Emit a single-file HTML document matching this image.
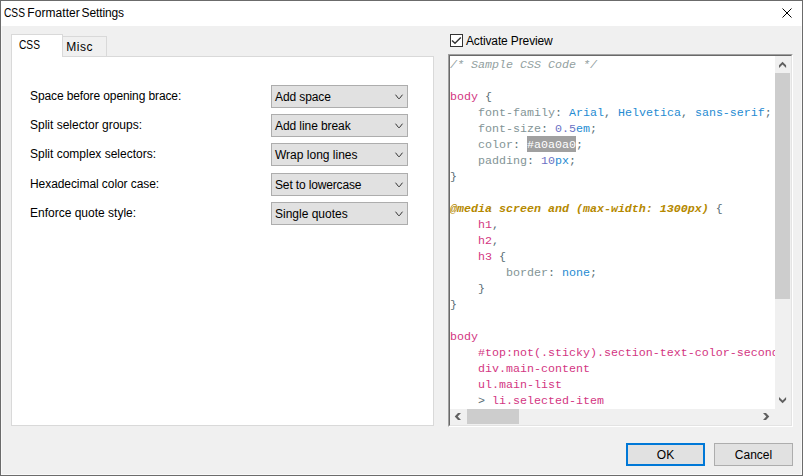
<!DOCTYPE html>
<html><head><meta charset="utf-8">
<style>
*{margin:0;padding:0;box-sizing:border-box}
html,body{width:803px;height:476px;overflow:hidden;background:#f0f0f0}
body{position:relative;font-family:"Liberation Sans",sans-serif;font-size:12px;color:#000}
.a{position:absolute}
#win{left:0;top:0;width:803px;height:476px;border:1px solid #6b6b6b;background:#f0f0f0}
#title{left:1px;top:1px;width:801px;height:25px;background:#fff}
#ttl{left:4px;top:6px;white-space:nowrap;line-height:14px;letter-spacing:-0.27px}
.lbl{white-space:nowrap;line-height:14px}
.tab{background:#fff;border:1px solid #d9d9d9}
.combo{width:137px;height:23px;background:#e1e1e1;border:1px solid #adadad}
.combo span{position:absolute;left:3px;top:4px;white-space:nowrap;line-height:14px}
.combo svg{position:absolute;left:0;top:0}
.btn{height:23px;width:79px;background:#e1e1e1;border:1px solid #adadad;text-align:center;line-height:22px}
#code{left:448px;top:54px;width:345px;height:373px;border-style:solid;border-width:1px;border-color:#a0a0a0 #fff #fff #a0a0a0;background:#fff}
#code2{left:449px;top:55px;width:343px;height:371px;border-style:solid;border-width:1px;border-color:#696969 #e3e3e3 #e3e3e3 #696969}
#codein{left:450px;top:56px;width:325px;height:353px;overflow:hidden;padding-top:1px;font-family:"Liberation Mono",monospace;font-size:11.67px;line-height:16px;white-space:pre;color:#586e75}
.cm{color:#93a1a1;font-style:italic}
.sl{color:#d33682}
.pr{color:#839496}
.vl{color:#268bd2}
.nm{color:#6c71c4}
.md{color:#b58900;font-weight:bold;font-style:italic}
.hl{color:#fff}
</style></head><body>
<div id="win" class="a"></div>
<div class="a" style="left:1px;top:1px;width:801px;height:474px;border:1px solid #f9f9f9;border-top:none"></div>
<div id="title" class="a"></div>
<div class="a lbl" style="left:3.6px;top:6px;transform:scaleX(0.85);transform-origin:0 0">CSS</div><div class="a lbl" style="left:27.3px;top:6px;letter-spacing:0.07px">Formatter</div><div class="a lbl" style="left:81.5px;top:6px;letter-spacing:-0.11px">Settings</div>
<svg class="a" style="left:0;top:0" width="803" height="30"><path d="M782.5 8.5 L791.5 17.5 M791.5 8.5 L782.5 17.5" stroke="#000" stroke-width="1" fill="none"/></svg>

<!-- tab control -->
<div class="a tab" style="left:11px;top:56px;width:423px;height:370px"></div>
<div class="a" style="left:62px;top:36px;width:45px;height:21px;background:#f0f0f0;border:1px solid #d9d9d9"></div>
<div class="a" style="left:11px;top:34px;width:52px;height:23px;background:#fff;border:1px solid #d9d9d9;border-bottom:none"></div>
<div class="a lbl" style="left:18.5px;top:38px;transform:scaleX(0.85);transform-origin:0 0">CSS</div>
<div class="a lbl" style="left:66.3px;top:40px;letter-spacing:0.5px">Misc</div>

<div class="a lbl" style="left:30px;top:89px;letter-spacing:-0.11px">Space before opening brace:</div>
<div class="a lbl" style="left:30px;top:118px">Split selector groups:</div>
<div class="a lbl" style="left:30px;top:147px">Split complex selectors:</div>
<div class="a lbl" style="left:30px;top:177px;letter-spacing:-0.07px">Hexadecimal color case:</div>
<div class="a lbl" style="left:30px;top:206px">Enforce quote style:</div>

<div class="a combo" style="left:271px;top:85px"><span style="letter-spacing:-0.1px">Add space</span><svg width="137" height="23"><path d="M123.5 8.7 L126.5 12.5 L127.5 12.5 L130.5 8.7" stroke="#333" fill="none"/></svg></div>
<div class="a combo" style="left:271px;top:114px"><span style="letter-spacing:-0.08px">Add line break</span><svg width="137" height="23"><path d="M123.5 8.7 L126.5 12.5 L127.5 12.5 L130.5 8.7" stroke="#333" fill="none"/></svg></div>
<div class="a combo" style="left:271px;top:143px"><span>Wrap long lines</span><svg width="137" height="23"><path d="M123.5 8.7 L126.5 12.5 L127.5 12.5 L130.5 8.7" stroke="#333" fill="none"/></svg></div>
<div class="a combo" style="left:271px;top:173px"><span style="letter-spacing:-0.15px">Set to lowercase</span><svg width="137" height="23"><path d="M123.5 8.7 L126.5 12.5 L127.5 12.5 L130.5 8.7" stroke="#333" fill="none"/></svg></div>
<div class="a combo" style="left:271px;top:202px"><span>Single quotes</span><svg width="137" height="23"><path d="M123.5 8.7 L126.5 12.5 L127.5 12.5 L130.5 8.7" stroke="#333" fill="none"/></svg></div>

<!-- preview -->
<div class="a" style="left:450px;top:34px;width:13px;height:13px;border:1px solid #333;background:#fff"></div>
<svg class="a" style="left:450px;top:34px" width="13" height="13"><path d="M2 6.4 L5 9.2 L10.8 3.4" stroke="#333" stroke-width="1.4" fill="none"/></svg>
<div class="a lbl" style="left:466px;top:34px;letter-spacing:-0.13px">Activate Preview</div>

<div id="code" class="a"></div><div id="code2" class="a"></div>
<div class="a" style="left:527px;top:136px;width:49px;height:16px;background:#a0a0a0"></div>
<div id="codein" class="a"><span class="cm">/* Sample CSS Code */</span>

<span class="sl">body</span> {
    <span class="pr">font-family</span>: <span class="vl">Arial</span>, <span class="vl">Helvetica</span>, <span class="vl">sans-serif</span>;
    <span class="pr">font-size</span>: <span class="nm">0.5</span><span class="vl">em</span>;
    <span class="pr">color</span>: <span class="hl">#a0a0a0</span>;
    <span class="pr">padding</span>: <span class="nm">10</span><span class="vl">px</span>;
}

<span class="md">@media screen and (max-width: 1300px)</span> {
    <span class="sl">h1</span>,
    <span class="sl">h2</span>,
    <span class="sl">h3</span> {
        <span class="pr">border</span>: <span class="vl">none</span>;
    }
}

<span class="sl">body</span>
    <span class="sl">#top:not(.sticky).section-text-color-secondary</span>
    <span class="sl">div.main-content</span>
    <span class="sl">ul.main-list</span>
    &gt; <span class="sl">li.selected-item</span>
</div>

<!-- scrollbars -->
<div class="a" style="left:775px;top:56px;width:16px;height:353px;background:#f0f0f0"></div>
<div class="a" style="left:775px;top:73px;width:15px;height:226px;background:#cdcdcd"></div>

<div class="a" style="left:450px;top:409px;width:341px;height:16px;background:#f0f0f0"></div>
<div class="a" style="left:467px;top:409px;width:52px;height:15px;background:#cdcdcd"></div>
<svg class="a" style="left:0;top:0" width="803" height="476"><g fill="#606060"><path d="M779 68 L779 65.2 L782.5 61.8 L786.1 65.2 L786.1 68 L782.5 64.6 Z"/><path d="M779 397 L782.6 400.4 L786.1 397 L786.1 399.8 L782.6 403.2 L779 399.8 Z"/><path d="M461 413 L458 413 L454.7 416.5 L458 420 L461 420 L457.7 416.5 Z"/><path d="M763 413 L766 413 L769.3 416.5 L766 420 L763 420 L766.3 416.5 Z"/></g></svg>

<!-- buttons -->
<div class="a btn" style="left:626px;top:443px;border:2px solid #0078d7;line-height:20px">OK</div>
<div class="a btn" style="left:714px;top:443px">Cancel</div>
</body></html>
